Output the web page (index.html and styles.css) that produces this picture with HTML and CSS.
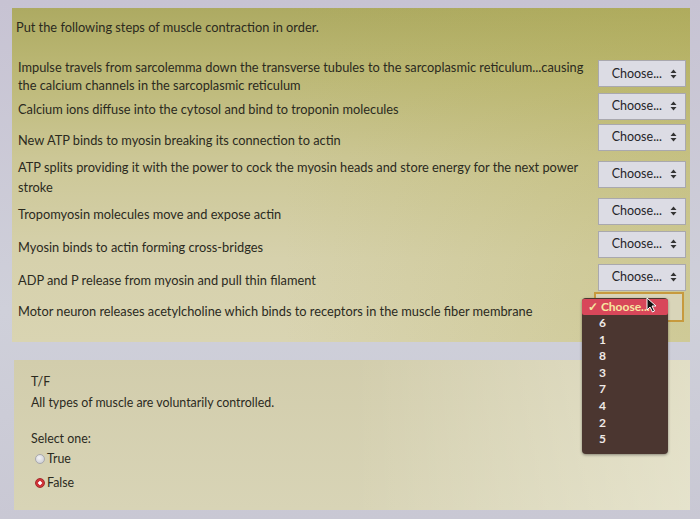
FILE: index.html
```html
<!DOCTYPE html>
<html>
<head>
<meta charset="utf-8">
<link rel="stylesheet" href="styles.css">
</head>
<body>
<div class="page">
  <section class="card card-order">
    <div class="title">Put the following steps of muscle contraction in order.</div>
    <div class="rows">
      <div class="row"><div class="txt">Impulse travels from sarcolemma down the transverse tubules to the sarcoplasmic reticulum...causing<br>the calcium channels in the sarcoplasmic reticulum</div><div class="sel">Choose... <svg class="arr" width="7" height="10" viewBox="0 0 7 10"><path d="M3.5 0.5L6.5 4H0.5Z M3.5 9.5L6.5 6H0.5Z" fill="#333"/></svg></div></div>
      <div class="row short"><div class="txt">Calcium ions diffuse into the cytosol and bind to troponin molecules</div><div class="sel">Choose... <svg class="arr" width="7" height="10" viewBox="0 0 7 10"><path d="M3.5 0.5L6.5 4H0.5Z M3.5 9.5L6.5 6H0.5Z" fill="#333"/></svg></div></div>
      <div class="row"><div class="txt">New ATP binds to myosin breaking its connection to actin</div><div class="sel">Choose... <svg class="arr" width="7" height="10" viewBox="0 0 7 10"><path d="M3.5 0.5L6.5 4H0.5Z M3.5 9.5L6.5 6H0.5Z" fill="#333"/></svg></div></div>
      <div class="row tall"><div class="txt">ATP splits providing it with the power to cock the myosin heads and store energy for the next power<br>stroke</div><div class="sel">Choose... <svg class="arr" width="7" height="10" viewBox="0 0 7 10"><path d="M3.5 0.5L6.5 4H0.5Z M3.5 9.5L6.5 6H0.5Z" fill="#333"/></svg></div></div>
      <div class="row"><div class="txt">Tropomyosin molecules move and expose actin</div><div class="sel">Choose... <svg class="arr" width="7" height="10" viewBox="0 0 7 10"><path d="M3.5 0.5L6.5 4H0.5Z M3.5 9.5L6.5 6H0.5Z" fill="#333"/></svg></div></div>
      <div class="row"><div class="txt">Myosin binds to actin forming cross-bridges</div><div class="sel">Choose... <svg class="arr" width="7" height="10" viewBox="0 0 7 10"><path d="M3.5 0.5L6.5 4H0.5Z M3.5 9.5L6.5 6H0.5Z" fill="#333"/></svg></div></div>
      <div class="row"><div class="txt">ADP and P release from myosin and pull thin filament</div><div class="sel">Choose... <svg class="arr" width="7" height="10" viewBox="0 0 7 10"><path d="M3.5 0.5L6.5 4H0.5Z M3.5 9.5L6.5 6H0.5Z" fill="#333"/></svg></div></div>
      <div class="row last"><div class="txt">Motor neuron releases acetylcholine which binds to receptors in the muscle fiber membrane</div>
        <div class="sel focus">
          <div class="menu">
            <div class="opt active">✓ Choose...</div>
            <div class="opt">6</div>
            <div class="opt">1</div>
            <div class="opt">8</div>
            <div class="opt">3</div>
            <div class="opt">7</div>
            <div class="opt">4</div>
            <div class="opt">2</div>
            <div class="opt">5</div>
          </div>
          <svg class="cursor" width="11" height="16" viewBox="0 0 11 16"><path d="M1 1V13L4 10L6.5 15L8.5 14L6 9H10Z" fill="#111" stroke="#fff" stroke-width="1"/></svg>
        </div>
      </div>
    </div>
  </section>
  <section class="card card-tf">
    <div class="qtype">T/F</div>
    <div class="qtext">All types of muscle are voluntarily controlled.</div>
    <div class="prompt">Select one:</div>
    <div class="answers">
      <div class="ans"><span class="radio"></span>True</div>
      <div class="ans"><span class="radio on"></span>False</div>
    </div>
  </section>
</div>
</body>
</html>
```
FILE: styles.css
```css
html, body {
  margin: 0;
  padding: 0;
}
body {
  width: 700px;
  height: 519px;
  overflow: hidden;
  background: linear-gradient(to bottom, #c7c3d3 0%, #cfd0da 60%, #c9c8d4 100%);
  font-family: Lato, "Open Sans", sans-serif;
  font-size: 12.8px;
  color: #2b2a1e;
}
.page {
  display: flex;
  flex-direction: column;
  gap: 18px;
  padding: 8px 10px 0 12px;
}
.card {
  box-sizing: border-box;
}
.card-order {
  height: 334px;
  padding: 11px 4px 0 4px;
  background:
    linear-gradient(to right, rgba(255,255,240,0) 40%, rgba(180,175,80,0.28) 100%),
    linear-gradient(to bottom, #adaa62 0%, #bbb774 18%, #ccc796 45%, #d6d1ac 75%, #d9d4b2 100%);
}
.title {
  line-height: 17px;
  margin-bottom: 22px;
}
.rows {
  display: flex;
  flex-direction: column;
  padding-left: 2px;
}
.row {
  display: flex;
  align-items: center;
  justify-content: space-between;
  min-height: 33px;
  line-height: 18px;
}
.row.short {
  min-height: 29px;
}
.row.tall {
  min-height: 41px;
  line-height: 20px;
}
.row.last {
  min-height: 29px;
}
.sel {
  position: relative;
  box-sizing: border-box;
  width: 88px;
  height: 27px;
  background: #dcdce4;
  border: 1px solid #a9a8ae;
  display: flex;
  align-items: center;
  justify-content: flex-end;
  gap: 8px;
  padding-right: 8px;
  font-size: 12.5px;
  color: #26252a;
  flex-shrink: 0;
  margin-top: -5px;
}
.arr {
  display: block;
}
.sel.focus {
  background: #d9d5b9;
  border: 2px solid #c79a3e;
  height: 30px;
  width: 90px;
  margin-top: -8px;
  margin-right: 2px;
}
.menu {
  position: absolute;
  left: -14px;
  top: 4px;
  width: 86px;
  height: 156px;
  box-sizing: border-box;
  background: #4b3630;
  border-radius: 4px;
  padding-top: 1px;
  box-shadow: 0 1px 3px rgba(0,0,0,0.4);
  z-index: 2;
}
.opt {
  height: 16.6px;
  line-height: 16.6px;
  padding-left: 17px;
  color: #efe9e6;
  font-weight: bold;
  font-size: 12px;
}
.opt.active {
  background: #d8475a;
  color: #f7e7a0;
  padding-left: 6px;
  border-radius: 2px;
}
.cursor {
  position: absolute;
  left: 50px;
  top: 3px;
  z-index: 3;
}
.card-tf {
  height: 150px;
  margin-left: 2px;
  padding: 13px 0 0 17px;
  font-size: 12.4px;
  background:
    linear-gradient(to right, rgba(255,255,255,0) 50%, rgba(255,255,245,0.35) 100%),
    linear-gradient(to bottom, #d2cdac 0%, #d8d4b6 100%);
}
.qtype {
  line-height: 17px;
}
.qtext {
  line-height: 17px;
  margin-top: 4px;
}
.prompt {
  line-height: 17px;
  margin-top: 19px;
}
.answers {
  display: flex;
  flex-direction: column;
  gap: 7px;
  margin-top: 3px;
  padding-left: 4px;
}
.ans {
  display: flex;
  align-items: center;
  gap: 2px;
  line-height: 17px;
}
.radio {
  width: 10px;
  height: 10px;
  border-radius: 50%;
  background: radial-gradient(circle at 40% 35%, #f4f4f6, #c5c6cc);
  border: 1px solid #a8a8ae;
  box-sizing: border-box;
}
.radio.on {
  background: radial-gradient(circle, #fff 0 1.5px, #d0343a 2px);
  border-color: #a32a2a;
}
```
